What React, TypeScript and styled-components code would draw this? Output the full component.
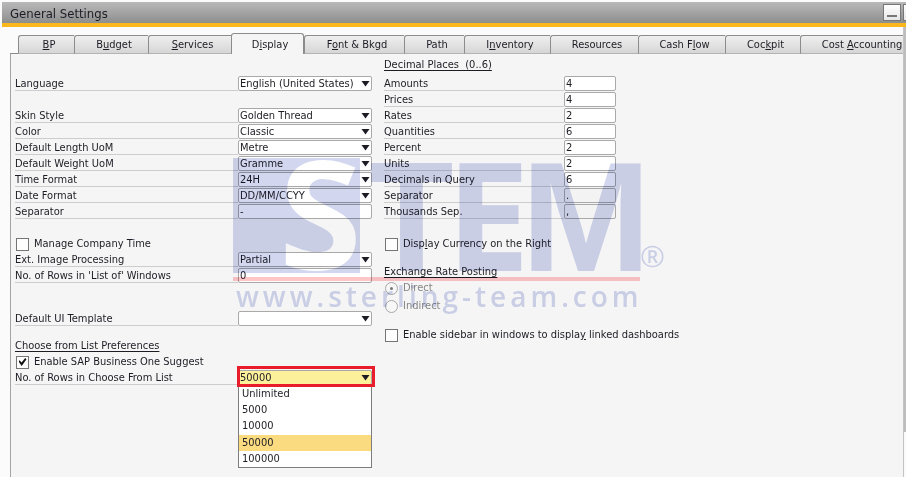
import React from "react";
import styled, { createGlobalStyle, css } from "styled-components";

const Global = createGlobalStyle`
  * { box-sizing: border-box; }
  body { margin: 0; background: #fbfbfb; }
  body, input, select, button {
    font-family: "DejaVu Sans Condensed", "DejaVu Sans", sans-serif;
    font-size: 11px;
    line-height: 16px;
    color: #1c1c24;
  }
`;

const Window = styled.div`
  display: flex;
  flex-direction: column;
  min-height: 100vh;
  padding: 2px 0 0 2px;
  overflow: hidden;
`;

const TitleBar = styled.header`
  display: flex;
  align-items: center;
  justify-content: space-between;
  height: 25px;
  padding-left: 8px;
  background: linear-gradient(#b9b9b9, #8e8e8e);
  border-bottom: 4px solid #fbb81c;
`;

const Title = styled.h1`
  margin: 0;
  padding-top: 3px;
  font-size: 13px;
  line-height: 20px;
  font-weight: 400;
`;

const WindowButtons = styled.div`
  display: flex;
  gap: 2px;
  height: 17px;
  overflow: hidden;
`;

const WindowButton = styled.button<{ $cut?: boolean }>`
  display: flex;
  align-items: flex-end;
  justify-content: center;
  width: ${(p) => (p.$cut ? 3 : 18)}px;
  height: 17px;
  padding: 0 0 3px;
  border: 1px solid #777;
  border-right-width: ${(p) => (p.$cut ? 0 : 1)}px;
  background: linear-gradient(#fff, #e6e6e6);
`;

const Content = styled.div`
  display: flex;
  flex: 1;
`;

const Main = styled.div`
  display: flex;
  flex-direction: column;
  flex: 1;
  min-width: 0;
  padding-left: 8px;
`;

const ScrollTrack = styled.div`
  display: flex;
  width: 3px;
  flex-direction: column;
  border-left: 1px solid #c4c4c4;
  background: #fafafa;
`;

const ScrollThumb = styled.div`
  flex: 0 0 90%;
  background: #bdbdbd;
`;

const TabBar = styled.nav`
  display: flex;
  align-items: flex-end;
  height: 27px;
  padding-left: 8px;
  overflow: hidden;
  background: linear-gradient(#8a8a8a, #8a8a8a) left bottom / 8px 1px no-repeat;
`;

const Tab = styled.button<{ $w: number; $active?: boolean }>`
  flex: 0 0 ${(p) => p.$w}px;
  height: 19px;
  padding: 0 0 0 5px;
  border: solid #8c8c8c;
  border-width: 1px 0 1px 1px;
  border-bottom-color: #b4b4b4;
  border-radius: 3px 0 0 0;
  background: linear-gradient(#efefef, #d6d6d6);
  white-space: nowrap;
  ${(p) =>
    p.$active &&
    css`
      height: 21px;
      padding-top: 2px;
      border-width: 1px 1px 0 1px;
      border-radius: 3px 3px 0 0;
      background: #f5f5f5;
    `}
`;

const Panel = styled.main`
  position: relative;
  flex: 1;
  display: flex;
  align-items: flex-start;
  gap: 12px;
  padding: 3px 0 8px 4px;
  border-left: 1px solid #a4a4a4;
  background: #f5f5f5;
`;

const Column = styled.section<{ $w: number; $top?: number }>`
  display: flex;
  flex-direction: column;
  width: ${(p) => p.$w}px;
  padding-top: ${(p) => p.$top ?? 0}px;
`;

const Row = styled.div<{ $gap?: number }>`
  position: relative;
  display: flex;
  align-items: flex-start;
  height: 16px;
  margin-top: ${(p) => p.$gap ?? 0}px;
`;

const RowLabel = styled.label`
  flex: 1;
  height: 15px;
  border-bottom: 1px solid #cdcdcd;
  white-space: nowrap;
`;

const SectionTitle = styled.h2<{ $gap?: number; $below?: number }>`
  margin: ${(p) => p.$gap ?? 0}px 0 ${(p) => p.$below ?? 0}px;
  font-size: 11px;
  line-height: 16px;
  font-weight: 400;
  text-decoration: underline;
  text-underline-offset: 2px;
  white-space: pre;
`;

const fieldBox = css`
  height: 15px;
  margin: 0;
  padding: 0 1px;
  border: 1px solid #a9a9a9;
  border-radius: 2px;
  line-height: 13px;
  outline: none;
`;

const TextField = styled.input<{ $w: number; $flat?: boolean }>`
  ${fieldBox}
  width: ${(p) => p.$w}px;
  background: ${(p) => (p.$flat ? "#f3f3f3" : "#fff")};
`;

const SelectWrap = styled.span`
  display: grid;
  width: 134px;
  align-items: center;
  & > * { grid-area: 1 / 1; }
  & > svg { justify-self: end; margin-right: 2px; pointer-events: none; }
`;

const SelectField = styled.select<{ $open?: boolean }>`
  ${fieldBox}
  width: 100%;
  appearance: none;
  background: ${(p) => (p.$open ? "#fdf09b" : "#fff")};
`;

const Highlight = styled.div`
  position: absolute;
  top: -4px;
  right: -3px;
  width: 138px;
  height: 21px;
  border: 3px solid #e81c2a;
  pointer-events: none;
`;

const Menu = styled.ul`
  position: absolute;
  top: 16px;
  right: 0;
  display: grid;
  grid-auto-rows: 1fr;
  width: 134px;
  height: 82px;
  margin: 0;
  padding: 0;
  border: 1px solid #7d7d7d;
  border-top: 0;
  background: #fff;
  list-style: none;
`;

const MenuItem = styled.li<{ $on?: boolean }>`
  padding-left: 3px;
  background: ${(p) => (p.$on ? "#fbdb80" : "transparent")};
`;

const Option = styled.label<{ $gap?: number; $muted?: boolean }>`
  display: flex;
  align-items: center;
  gap: 5px;
  height: 16px;
  margin-top: ${(p) => p.$gap ?? 0}px;
  padding-left: 1px;
  color: ${(p) => (p.$muted ? "#858585" : "inherit")};
  white-space: nowrap;
`;

const Mark = styled.input`
  appearance: none;
  display: grid;
  flex: none;
  place-items: center;
  width: 13px;
  height: 13px;
  margin: 0;
  border: 1px solid #757575;
  background: #fdfdfd;
`;

const CheckMark = styled(Mark)`
  &:checked::before {
    content: "";
    width: 8px;
    height: 8px;
    background: #111;
    clip-path: polygon(0 45%, 14% 28%, 38% 56%, 84% 0, 100% 16%, 40% 100%);
  }
`;

const RadioMark = styled(Mark)`
  border-color: #a8a8a8;
  border-radius: 50%;
  background: #f7f7f7;
  &:checked::before {
    content: "";
    width: 3px;
    height: 3px;
    border-radius: 50%;
    background: #777;
  }
`;

const Watermark = styled.svg`
  position: absolute;
  left: 222px;
  top: 100px;
  mix-blend-mode: multiply;
  pointer-events: none;
`;

const Arrow = () => (
  <svg width="9" height="7" viewBox="0 0 9 7" aria-hidden="true">
    <path d="M0.5 1h8L4.5 6.5z" fill="#1c1c24" />
  </svg>
);

/** Renders a caption with its access key (marked by "_") underlined. */
const Caption = ({ text }: { text: string }) => {
  const i = text.indexOf("_");
  if (i < 0) return <>{text}</>;
  return (
    <span>
      {text.slice(0, i)}
      <u>{text[i + 1]}</u>
      {text.slice(i + 2)}
    </span>
  );
};

const tabs: [string, number][] = [
  ["_BP", 56],
  ["B_udget", 74],
  ["_Services", 83],
  ["D_isplay", 73],
  ["F_ont & Bkgd", 100],
  ["Path", 60],
  ["I_nventory", 86],
  ["Resources", 88],
  ["Cash F_low", 87],
  ["Coc_kpit", 75],
  ["Cost _Accounting", 118],
];

type SelectRowProps = { id: string; label: string; value: string; gap?: number };
const SelectRow = ({ id, label, value, gap }: SelectRowProps) => (
  <Row $gap={gap}>
    <RowLabel htmlFor={id}>{label}</RowLabel>
    <SelectWrap>
      <SelectField id={id} defaultValue={value}>
        <option>{value}</option>
      </SelectField>
      <Arrow />
    </SelectWrap>
  </Row>
);

type TextRowProps = { id: string; label: string; value: string; w: number; flat?: boolean };
const TextRow = ({ id, label, value, w, flat }: TextRowProps) => (
  <Row>
    <RowLabel htmlFor={id}>{label}</RowLabel>
    <TextField id={id} defaultValue={value} $w={w} $flat={flat} />
  </Row>
);

const decimals: [string, string][] = [
  ["Amounts", "4"],
  ["Prices", "4"],
  ["Rates", "2"],
  ["Quantities", "6"],
  ["Percent", "2"],
  ["Units", "2"],
  ["Decimals in Query", "6"],
  ["Separator", "."],
  ["Thousands Sep.", ","],
];

const rowCounts = ["Unlimited", "5000", "10000", "50000", "100000"];

export default function App() {
  return (
    <Window>
      <Global />
      <TitleBar>
        <Title>General Settings</Title>
        <WindowButtons>
          <WindowButton aria-label="Minimize">
            <svg width="10" height="2" aria-hidden="true">
              <path d="M0 1h10" stroke="#777" strokeWidth="2" />
            </svg>
          </WindowButton>
          <WindowButton aria-label="Maximize" $cut />
        </WindowButtons>
      </TitleBar>
      <Content>
        <Main>
          <TabBar>
            {tabs.map(([text, w]) => (
              <Tab key={text} $w={w} $active={text === "D_isplay"}>
                <Caption text={text} />
              </Tab>
            ))}
          </TabBar>
          <Panel>
            <Column $w={357} $top={19}>
              <SelectRow id="language" label="Language" value="English (United States)" />
              <SelectRow id="skin" label="Skin Style" value="Golden Thread" gap={16} />
              <SelectRow id="color" label="Color" value="Classic" />
              <SelectRow id="length" label="Default Length UoM" value="Metre" />
              <SelectRow id="weight" label="Default Weight UoM" value="Gramme" />
              <SelectRow id="time" label="Time Format" value="24H" />
              <SelectRow id="date" label="Date Format" value="DD/MM/CCYY" />
              <TextRow id="dateSep" label="Separator" value="-" w={134} />
              <Option $gap={16}>
                <CheckMark type="checkbox" />
                Manage Company Time
              </Option>
              <SelectRow id="image" label="Ext. Image Processing" value="Partial" />
              <TextRow id="listRows" label="No. of Rows in 'List of' Windows" value="0" w={134} />
              <SelectRow id="template" label="Default UI Template" value="" gap={27} />
              <SectionTitle $gap={11}>Choose from List Preferences</SectionTitle>
              <Option>
                <CheckMark type="checkbox" defaultChecked />
                Enable SAP Business One Suggest
              </Option>
              <Row>
                <RowLabel htmlFor="chooseRows">No. of Rows in Choose From List</RowLabel>
                <SelectWrap>
                  <SelectField id="chooseRows" defaultValue="50000" $open>
                    {rowCounts.map((n) => (
                      <option key={n}>{n}</option>
                    ))}
                  </SelectField>
                  <Arrow />
                </SelectWrap>
                <Menu role="listbox">
                  {rowCounts.map((n) => (
                    <MenuItem key={n} role="option" aria-selected={n === "50000"} $on={n === "50000"}>
                      {n}
                    </MenuItem>
                  ))}
                </Menu>
                <Highlight />
              </Row>
            </Column>
            <Column $w={232}>
              <SectionTitle $below={3}>{"Decimal Places  (0..6)"}</SectionTitle>
              {decimals.map(([label, value]) => (
                <TextRow
                  key={label}
                  id={`dec-${label}`}
                  label={label}
                  value={value}
                  w={52}
                  flat={value === "." || value === ","}
                />
              ))}
              <Option $gap={16}>
                <CheckMark type="checkbox" />
                <Caption text="Disp_lay Currency on the Right" />
              </Option>
              <SectionTitle $gap={12}>Exchange Rate Posting</SectionTitle>
              <Option $muted>
                <RadioMark type="radio" name="posting" defaultChecked disabled />
                Direct
              </Option>
              <Option $muted $gap={2}>
                <RadioMark type="radio" name="posting" disabled />
                Indirect
              </Option>
              <Option $gap={13}>
                <CheckMark type="checkbox" />
                <Caption text="Enable sidebar in windows to displa_y linked dashboards" />
              </Option>
            </Column>
            <Watermark width="440" height="162" viewBox="233 154 440 162" aria-hidden="true">
              <rect x="233" y="158" width="127" height="115" fill="#d2d7ef" />
              <g fontFamily="Open Sans" fontWeight="700" fontSize="150">
                <text x="279" y="270" fill="#fff">S</text>
                <g fill="#d2d7ef">
                  <text x="368" y="271">T</text>
                  <text x="446" y="271">E</text>
                  <text x="521" y="271" fontFamily="Liberation Sans" fontSize="156">M</text>
                </g>
              </g>
              <text x="640" y="267" fill="#d2d7ef" fontFamily="Open Sans" fontSize="30">®</text>
              <rect x="233" y="277" width="407" height="4" fill="#ffc6c8" />
              <text x="236" y="307" fill="#d2d7ef" fontFamily="Open Sans" fontWeight="600" fontSize="28" letterSpacing="4">
                www.sterling-team.com
              </text>
            </Watermark>
          </Panel>
        </Main>
        <ScrollTrack>
          <ScrollThumb />
        </ScrollTrack>
      </Content>
    </Window>
  );
}
